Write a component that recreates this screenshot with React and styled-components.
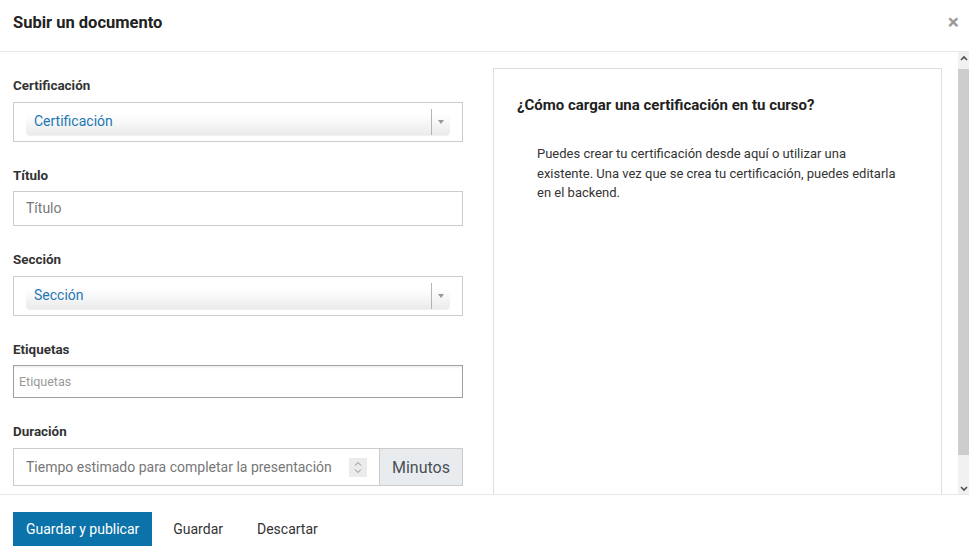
import React, { useEffect, useRef } from 'react';
import styled, { createGlobalStyle } from 'styled-components';

const GlobalStyle = createGlobalStyle`
  html, body {
    margin: 0;
    padding: 0;
    background: #fff;
    font-family: Roboto, "Liberation Sans", Arial, sans-serif;
  }
  * { box-sizing: border-box; }
`;

const Modal = styled.div`
  width: 969px;
  height: 558px;
  display: flex;
  flex-direction: column;
  background: #fff;
  overflow: hidden;
`;

const Header = styled.div`
  height: 52px;
  flex-shrink: 0;
  display: flex;
  align-items: center;
  justify-content: space-between;
  padding: 0 10px 6px 13px;
  border-bottom: 1px solid #e8e8e8;
`;

const Title = styled.h4`
  margin: 0;
  font-size: 16.5px;
  font-weight: 700;
  color: #222;
`;

const Close = styled.span`
  font-size: 21px;
  font-weight: 700;
  color: #9a9a9a;
  line-height: 1;
`;

const BodyRow = styled.div`
  height: 442px;
  flex-shrink: 0;
  display: flex;
`;

const Body = styled.div`
  flex: 1;
  overflow: hidden;
  padding: 23px 5px 16px 13px;
`;

const ScrollRail = styled.div`
  width: 11px;
  display: flex;
  flex-direction: column;
  background: #f1f1f1;
`;

const ScrollButton = styled.div`
  height: 11px;
  display: flex;
  align-items: center;
  justify-content: center;
`;

const ScrollTrack = styled.div`
  flex: 1;
  padding: 6px 0 28px;
  display: flex;
`;

const ScrollThumb = styled.div`
  flex: 1;
  background: #cdcdcd;
`;

const Columns = styled.div`
  display: grid;
  grid-template-columns: 450px 449px;
  column-gap: 30px;
  align-items: start;
`;

const FormColumn = styled.div`
  display: flex;
  flex-direction: column;
  gap: 24px;
  padding-top: 8px;
`;

const Field = styled.div`
  display: flex;
  flex-direction: column;
  gap: ${p => p.$gap || 8}px;
`;

const Label = styled.label`
  font-size: 13.4px;
  font-weight: 700;
  color: #333;
  line-height: 18px;
  padding-top: 1px;
  margin-bottom: -1px;
`;

const SelectBox = styled.div`
  height: 40px;
  border: 1px solid #ccc;
  padding: 6px 12px;
`;

const SelectSingle = styled.div`
  height: 26px;
  display: flex;
  align-items: center;
  border-radius: 4px;
  background: linear-gradient(#fff 20%, #f8f8f8 50%, #f0f0f0 80%, #ebebeb 100%);
  box-shadow: 0 1px 0 #f0f0f0;
`;

const SelectText = styled.span`
  flex: 1;
  padding-left: 8px;
  padding-bottom: 2px;
  font-size: 14px;
  color: #1d78b4;
`;

const SelectArrow = styled.span`
  width: 19px;
  height: 100%;
  border-left: 1px solid #b4b4b4;
  display: flex;
  align-items: center;
  justify-content: center;

  &::after {
    content: '';
    border-left: 3px solid transparent;
    border-right: 3px solid transparent;
    border-top: 4px solid #999;
  }
`;

const TextInput = styled.input`
  height: ${p => p.$height || 35}px;
  width: 100%;
  border: 1px solid ${p => (p.$dark ? '#a0a0a0' : '#ccc')};
  box-shadow: ${p => (p.$dark ? 'inset 0 2px 2px rgba(0,0,0,0.06)' : 'none')};
  padding: 0 ${p => p.$pad || 12}px ${p => (p.$dark ? 0 : 2)}px;
  font-family: Roboto, "Liberation Sans", Arial, sans-serif;
  font-size: ${p => p.$size || 14}px;
  color: #333;
  outline: none;
  background: #fff;

  &::placeholder {
    color: ${p => (p.$dark ? '#999' : '#777')};
  }
`;

const InputGroup = styled.div`
  display: flex;
  height: 38px;
`;

const NumberWrap = styled.div`
  flex: 1;
  display: flex;
  align-items: center;
  border: 1px solid #ccc;
  border-right: none;
  padding: 0 12px;
`;

const NumberPlaceholder = styled.span`
  flex: 1;
  font-size: 14px;
  color: #777;
  white-space: nowrap;
`;

const Spinner = styled.span`
  width: 18px;
  height: 19px;
  background: #ebebeb;
  display: flex;
  align-items: center;
  justify-content: center;
`;

const Addon = styled.span`
  width: 84px;
  display: flex;
  align-items: center;
  justify-content: center;
  background: #e9ecef;
  border: 1px solid #ccc;
  font-size: 16px;
  color: #495057;
`;

const HelpPanel = styled.div`
  height: 442px;
  border: 1px solid #ddd;
  padding: 25px 23px;
`;

const HelpTitle = styled.h5`
  margin: 0 0 28px;
  font-size: 15px;
  font-weight: 700;
  color: #222;
  line-height: 22px;
`;

const HelpText = styled.p`
  margin: 0;
  padding: 0 20px;
  font-size: 13px;
  line-height: 19.5px;
  color: #333;
`;

const Footer = styled.div`
  flex: 1;
  border-top: 1px solid #e8e8e8;
  display: flex;
  align-items: flex-start;
  gap: 8px;
  padding: 17px 13px 0;
`;

const Button = styled.button`
  height: 34px;
  padding: 0 13px;
  border: none;
  background: ${p => (p.$primary ? '#0b73aa' : 'transparent')};
  color: ${p => (p.$primary ? '#fff' : '#333')};
  font-family: Roboto, "Liberation Sans", Arial, sans-serif;
  font-size: 14px;
  cursor: pointer;
`;

const Select = ({ value }) => (
  <SelectBox>
    <SelectSingle>
      <SelectText>{value}</SelectText>
      <SelectArrow />
    </SelectSingle>
  </SelectBox>
);

const SpinnerIcon = () => (
  <svg width="8" height="13" viewBox="0 0 8 13">
    <path d="M1 4.5 L4 1.5 L7 4.5 M1 8.5 L4 11.5 L7 8.5" fill="none" stroke="#888" strokeWidth="1" />
  </svg>
);

const Chevron = ({ up }) => (
  <svg width="8" height="6" viewBox="0 0 8 6">
    <path d={up ? 'M1 5 L4 2 L7 5' : 'M1 1 L4 4 L7 1'} fill="none" stroke="#505050" strokeWidth="1.6" />
  </svg>
);

export default function App() {
  const bodyRef = useRef(null);

  useEffect(() => {
    if (bodyRef.current) bodyRef.current.scrollTop = 7;
  }, []);

  return (
    <>
      <GlobalStyle />
      <Modal>
        <Header>
          <Title>Subir un documento</Title>
          <Close>×</Close>
        </Header>
        <BodyRow>
          <Body ref={bodyRef}>
            <Columns>
              <FormColumn>
                <Field>
                  <Label>Certificación</Label>
                  <Select value="Certificación" />
                </Field>
                <Field $gap={7}>
                  <Label>Título</Label>
                  <TextInput placeholder="Título" />
                </Field>
                <Field>
                  <Label>Sección</Label>
                  <Select value="Sección" />
                </Field>
                <Field $gap={7}>
                  <Label>Etiquetas</Label>
                  <TextInput placeholder="Etiquetas" $height={33} $dark $pad={5} $size={12.5} />
                </Field>
                <Field>
                  <Label>Duración</Label>
                  <InputGroup>
                    <NumberWrap>
                      <NumberPlaceholder>Tiempo estimado para completar la presentación</NumberPlaceholder>
                      <Spinner>
                        <SpinnerIcon />
                      </Spinner>
                    </NumberWrap>
                    <Addon>Minutos</Addon>
                  </InputGroup>
                </Field>
              </FormColumn>
              <HelpPanel>
                <HelpTitle>¿Cómo cargar una certificación en tu curso?</HelpTitle>
                <HelpText>
                  Puedes crear tu certificación desde aquí o utilizar una existente. Una vez que se crea tu
                  certificación, puedes editarla en el backend.
                </HelpText>
              </HelpPanel>
            </Columns>
          </Body>
          <ScrollRail>
            <ScrollButton>
              <Chevron up />
            </ScrollButton>
            <ScrollTrack>
              <ScrollThumb />
            </ScrollTrack>
            <ScrollButton>
              <Chevron />
            </ScrollButton>
          </ScrollRail>
        </BodyRow>
        <Footer>
          <Button $primary>Guardar y publicar</Button>
          <Button>Guardar</Button>
          <Button>Descartar</Button>
        </Footer>
      </Modal>
    </>
  );
}
